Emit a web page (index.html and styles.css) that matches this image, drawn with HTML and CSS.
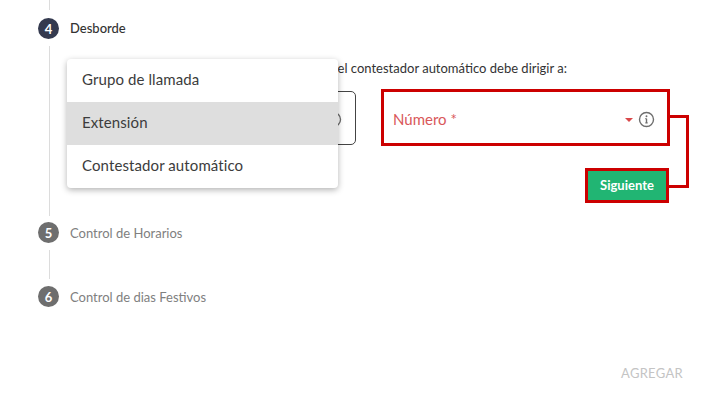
FILE: index.html
```html
<!DOCTYPE html>
<html lang="es">
<head>
    <meta charset="UTF-8">
    <meta name="viewport" content="width=device-width, initial-scale=1.0">
    <title>Desborde</title>
    <link rel="stylesheet" href="styles.css">
</head>
<body>
    <div class="stepper">
        <div class="rail rail-top"></div>

        <div class="step step-active">
            <span class="step-num">4</span>
            <span class="step-label">Desborde</span>
        </div>
        <div class="step-body">
            <p class="step-text">Seleccione a dónde el contestador automático debe dirigir a:</p>
            <div class="fields">
                <div class="select-box">
                    <svg class="info-icon" viewBox="0 0 16 16"><circle cx="8" cy="8" r="6.6"/><path d="M8 7.2v4M6.9 11.2h2.2M6.9 7.2h1.1"/><circle class="dot" cx="8" cy="4.9" r="0.9"/></svg>
                </div>
                <div class="number-field">
                    <span class="number-label">Número *</span>
                    <span class="caret"></span>
                    <svg class="info-icon" viewBox="0 0 16 16"><circle cx="8" cy="8" r="6.6"/><path d="M8 7.2v4M6.9 11.2h2.2M6.9 7.2h1.1"/><circle class="dot" cx="8" cy="4.9" r="0.9"/></svg>
                </div>
            </div>
            <div class="actions">
                <button type="button" class="btn-next">Siguiente</button>
            </div>

            <ul class="menu">
                <li>Grupo de llamada</li>
                <li class="selected">Extensión</li>
                <li>Contestador automático</li>
            </ul>
            <div class="connector"></div>
        </div>

        <div class="step">
            <span class="step-num">5</span>
            <span class="step-label">Control de Horarios</span>
        </div>
        <div class="rail rail-mid"></div>
        <div class="step">
            <span class="step-num">6</span>
            <span class="step-label">Control de dias Festivos</span>
        </div>
    </div>

    <div class="footer">
        <span class="btn-add">AGREGAR</span>
    </div>
</body>
</html>
```

FILE: styles.css
```css
* {
    box-sizing: border-box;
    margin: 0;
    padding: 0;
}

body {
    background-color: #fff;
    font-family: 'Lato', 'Noto Sans', sans-serif;
    color: #3c3c3c;
    width: 709px;
    height: 402px;
    overflow: hidden;
}

.stepper {
    padding-left: 38px;
}

.rail {
    width: 1px;
    margin-left: 11px;
    background-color: #dcdcdc;
}

.rail-top {
    height: 10px;
    margin-bottom: 8px;
}

.rail-mid {
    height: 29px;
    margin-top: 7px;
    margin-bottom: 7px;
}

.step {
    display: flex;
    align-items: center;
    gap: 11px;
    height: 21px;
    font-size: 13px;
    color: #808080;
}

.step-active {
    color: #333;
    font-weight: 500;
}

.step-active .step-label {
    margin-top: -2px;
}

.step-num {
    width: 21px;
    height: 21px;
    border-radius: 50%;
    background-color: #6e6e6e;
    color: #fff;
    font-size: 13px;
    font-weight: 700;
    display: flex;
    align-items: center;
    justify-content: center;
}

.step-active .step-num {
    background-color: #343a4f;
}

.step-body {
    position: relative;
    margin-top: 7px;
    margin-bottom: 6px;
    margin-left: 11px;
    height: 170px;
    width: 640px;
    border-left: 1px solid #dcdcdc;
}

.step-text {
    width: 517px;
    padding-top: 14px;
    height: 43px;
    font-size: 13px;
    line-height: 17px;
    text-align: right;
    color: #333;
    white-space: nowrap;
}

.fields {
    display: flex;
    align-items: center;
    gap: 25px;
    padding-left: 17px;
}

.select-box {
    width: 289px;
    height: 54px;
    border: 1px solid #444;
    border-radius: 5px;
    display: flex;
    align-items: center;
    justify-content: flex-end;
    padding-right: 13px;
}

.number-field {
    width: 289px;
    height: 57px;
    border: 3px solid #cc0000;
    display: flex;
    align-items: center;
    padding-left: 9px;
    padding-right: 12px;
}

.number-label {
    flex: 1;
    font-size: 15px;
    color: #d9575a;
    margin-top: 3px;
}

.caret {
    width: 0;
    height: 0;
    border-left: 4px solid transparent;
    border-right: 4px solid transparent;
    border-top: 4px solid #d9484a;
    margin-right: 5px;
    margin-top: 4px;
}

.info-icon {
    width: 17px;
    height: 17px;
    margin-top: 4px;
    fill: none;
    stroke: #6e6e6e;
    stroke-width: 1.3;
}

.info-icon .dot {
    fill: #6e6e6e;
    stroke: none;
}

.actions {
    display: flex;
    justify-content: flex-end;
    width: 619px;
    margin-top: 22px;
}

.btn-next {
    width: 84px;
    height: 35px;
    padding-bottom: 2px;
    border: 3px solid #cc0000;
    background-color: #21b573;
    color: #fff;
    font-family: inherit;
    font-size: 13px;
    font-weight: 700;
}

.menu {
    position: absolute;
    left: 17px;
    top: 13px;
    width: 271px;
    list-style: none;
    background-color: #fff;
    border-radius: 4px;
    box-shadow: 0 2px 6px rgba(0, 0, 0, 0.3);
    overflow: hidden;
}

.menu li {
    height: 43px;
    line-height: 41px;
    padding-left: 15px;
    font-size: 15px;
    letter-spacing: 0.1px;
    color: #3c3c3c;
}

.menu .selected {
    background-color: #dedede;
}

.connector {
    position: absolute;
    left: 619px;
    top: 69px;
    width: 20px;
    height: 73px;
    border: 3px solid #cc0000;
    border-left: none;
}

.footer {
    display: flex;
    justify-content: flex-end;
    padding-right: 26px;
    margin-top: 58px;
}

.btn-add {
    font-size: 13px;
    line-height: 16px;
    letter-spacing: 0.3px;
    color: #c4c4c4;
}
```
